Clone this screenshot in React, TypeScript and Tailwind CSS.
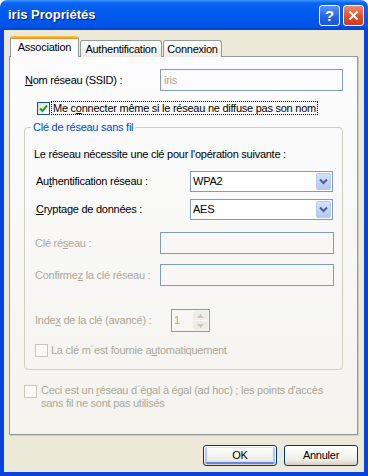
const font = "font-['Liberation_Sans',Arial,sans-serif]";

function Check({ checked, disabled }: { checked?: boolean; disabled?: boolean }) {
  return (
    <div
      className={`grid size-[13px] shrink-0 place-items-center border ${
        disabled
          ? "border-[#CAC8BB] bg-[#FBFBF8]"
          : "border-[#1C5180] bg-[linear-gradient(135deg,#DCDCD7,#FFFFFF)]"
      }`}
    >
      {checked && (
        <svg width="9" height="9" viewBox="0 0 9 9">
          <path d="M1 4.5 3.5 7 8 1.5" fill="none" stroke="#21A121" strokeWidth="2" />
        </svg>
      )}
    </div>
  );
}

function Select({ value }: { value: string }) {
  return (
    <div className="flex h-[21px] w-[143px] items-center border border-[#7F9DB9] bg-white pr-px pl-[2px]">
      <span className="flex-1 text-black">{value}</span>
      <div className="grid h-[17px] w-[15px] place-items-center rounded-[2px] border border-[#B9CBF3] bg-[linear-gradient(#D3E1FD,#B4C8F6)]">
        <svg width="9" height="7" viewBox="0 0 9 7">
          <path d="M1 1.5 4.5 5 8 1.5" fill="none" stroke="#4D6185" strokeWidth="2" />
        </svg>
      </div>
    </div>
  );
}

function Edit({ w, value }: { w: string; value?: string }) {
  return (
    <div className={`flex h-[22px] ${w} items-center border border-[#7F9DB9] pl-[3px] text-[#ACA899]`}>
      {value}
    </div>
  );
}

export default function App() {
  return (
    <div className={`${font} h-[476px] w-[368px] bg-white text-[11px] tracking-[-0.25px] text-black`}>
      <div className="flex h-full flex-col">
        {/* title bar */}
        <div className="flex h-[30px] shrink-0 items-center rounded-t-[7px] bg-[linear-gradient(#3D95FF_0%,#0A64F0_10%,#0058EE_45%,#0054E6_85%,#0044D4_100%)] pr-[4px] pl-[8px]">
          <span className="flex-1 pb-px text-[13px] font-bold tracking-normal text-white [text-shadow:1px_1px_#0A1883]">
            iris Propriétés
          </span>
          <div className="flex gap-[3px]">
            <div className="grid size-[21px] place-items-center rounded-[3px] border border-white bg-[linear-gradient(#5A93FA,#2663E0_60%,#1F55D3)] text-[15px] leading-none font-bold text-white">
              ?
            </div>
            <div className="grid size-[21px] place-items-center rounded-[3px] border border-white bg-[linear-gradient(#F08B6B,#E04F2A_55%,#CF3C1B)]">
              <svg width="11" height="11" viewBox="0 0 11 11">
                <path d="M1.5 1.5 9.5 9.5M9.5 1.5 1.5 9.5" stroke="white" strokeWidth="2" />
              </svg>
            </div>
          </div>
        </div>

        {/* body */}
        <div className="flex flex-1 flex-col border-x-4 border-b-4 border-[#0842DC] bg-[#ECE9D8] px-[5px] pt-[6px]">
          {/* tabs */}
          <div className="relative z-10 -mb-px flex h-[21px] items-end pl-px">
            <div className="flex h-[21px] w-[69px] flex-col rounded-t-[3px] border-x border-[#919B9C] bg-[#FCFCFE]">
              <div className="h-[3px] rounded-t-[3px] bg-[linear-gradient(#FFC83C,#E68B2C)]" />
              <div className="flex flex-1 items-center justify-center pb-[2px]">Association</div>
            </div>
            <div className="ml-px flex h-[17px] w-[82px] items-center justify-center rounded-t-[3px] border border-b-0 border-[#919B9C] bg-[linear-gradient(#FFFFFF,#ECEBE6)]">
              Authentification
            </div>
            <div className="ml-px flex h-[17px] w-[59px] items-center justify-center rounded-t-[3px] border border-b-0 border-[#919B9C] bg-[linear-gradient(#FFFFFF,#ECEBE6)]">
              Connexion
            </div>
          </div>

          {/* panel */}
          <div className="flex h-[379px] w-[349px] flex-col border border-[#919B9C] bg-[linear-gradient(#FCFCFE,#F4F3EE)] shadow-[1px_1px_0_#D0CEBF]">
            <div className="mt-[12px] flex h-[22px] items-center pl-[15px]">
              <span className="w-[135px]">
                <u>N</u>om réseau (SSID) :
              </span>
              <Edit w="w-[183px]" value="iris" />
            </div>

            <div className="mt-[10px] flex h-[14px] items-center pl-[27px]">
              <Check checked />
              <span className="ml-[1px] flex h-[14px] items-center border border-dotted border-black pr-px pl-[1px]">
                Me c<u>o</u>nnecter même si le réseau ne diffuse pas son nom
              </span>
            </div>

            <fieldset className="mt-[6px] ml-[14px] w-[319px] rounded-[4px] border border-[#D0D0BF] pb-[10px]">
              <legend className="ml-[6px] px-[2px] leading-[13px] text-[#0046D5]">Clé de réseau sans fil</legend>

              <div className="mt-[14px] pl-[9px] leading-[13px]">
                Le réseau nécessite une clé pour l&apos;opération suivante :
              </div>

              <div className="mt-[10px] flex items-center pl-[11px]">
                <span className="w-[154px]">
                  Au<u>t</u>hentification réseau :
                </span>
                <Select value="WPA2" />
              </div>
              <div className="mt-[7px] flex items-center pl-[11px]">
                <span className="w-[154px]">
                  <u>C</u>ryptage de données :
                </span>
                <Select value="AES" />
              </div>

              <div className="mt-[12px] flex items-center pl-[10px] text-[#ACA899]">
                <span className="w-[125px]">
                  Clé ré<u>s</u>eau :
                </span>
                <Edit w="w-[174px]" />
              </div>
              <div className="mt-[10px] flex items-center pl-[10px] text-[#ACA899]">
                <span className="w-[125px]">
                  Confirme<u>z</u> la clé réseau :
                </span>
                <Edit w="w-[174px]" />
              </div>

              <div className="mt-[23px] flex items-center pl-[10px] text-[#ACA899]">
                <span className="w-[136px]">
                  Inde<u>x</u> de la clé (avancé) :
                </span>
                <div className="flex h-[23px] w-[39px] items-center border border-[#7F9DB9] py-[1px] pr-[1px] pl-[2px]">
                  <span className="flex-1">1</span>
                  <div className="flex h-full w-[15px] flex-col">
                    <div className="grid flex-1 place-items-center rounded-t-[2px] bg-[#EEEDE5]">
                      <svg width="7" height="4" viewBox="0 0 7 4">
                        <path d="M0 4 3.5 0 7 4z" fill="#C9C7BA" />
                      </svg>
                    </div>
                    <div className="h-px bg-[#F8F7F2]" />
                    <div className="grid flex-1 place-items-center rounded-b-[2px] bg-[#EEEDE5]">
                      <svg width="7" height="4" viewBox="0 0 7 4">
                        <path d="M0 0 3.5 4 7 0z" fill="#C9C7BA" />
                      </svg>
                    </div>
                  </div>
                </div>
              </div>

              <div className="mt-[10px] flex items-center gap-[3px] pl-[10px] text-[#ACA899]">
                <Check disabled />
                <span>
                  La clé m´est fournie a<u>u</u>tomatiquement
                </span>
              </div>
            </fieldset>

            <div className="mt-[15px] flex gap-[4px] pl-[14px] text-[#ACA899]">
              <Check disabled />
              <span className="-mt-[1px] leading-[13px]">
                Ceci est un <u>r</u>éseau d´égal à égal (ad hoc) ; les points d&apos;accès
                <br />
                sans fil ne sont pas utilisés
              </span>
            </div>
          </div>

          {/* buttons */}
          <div className="mt-[10px] flex justify-end gap-[7px] pr-px">
            <div className="h-[21px] w-[74px] rounded-[3px] border border-[#003C74] bg-[linear-gradient(#FFFFFF,#F0EFEA_70%,#D6D0C5)] p-px">
              <div className="flex h-full items-center justify-center rounded-[2px] border-x-2 border-t border-b-2 border-x-[#B0C6F7] border-t-[#CEE7FF] border-b-[#6982EE]">
                OK
              </div>
            </div>
            <div className="flex h-[21px] w-[74px] items-center justify-center rounded-[3px] border border-[#003C74] bg-[linear-gradient(#FFFFFF,#F0EFEA_70%,#D6D0C5)]">
              Annuler
            </div>
          </div>
        </div>
      </div>
    </div>
  );
}
